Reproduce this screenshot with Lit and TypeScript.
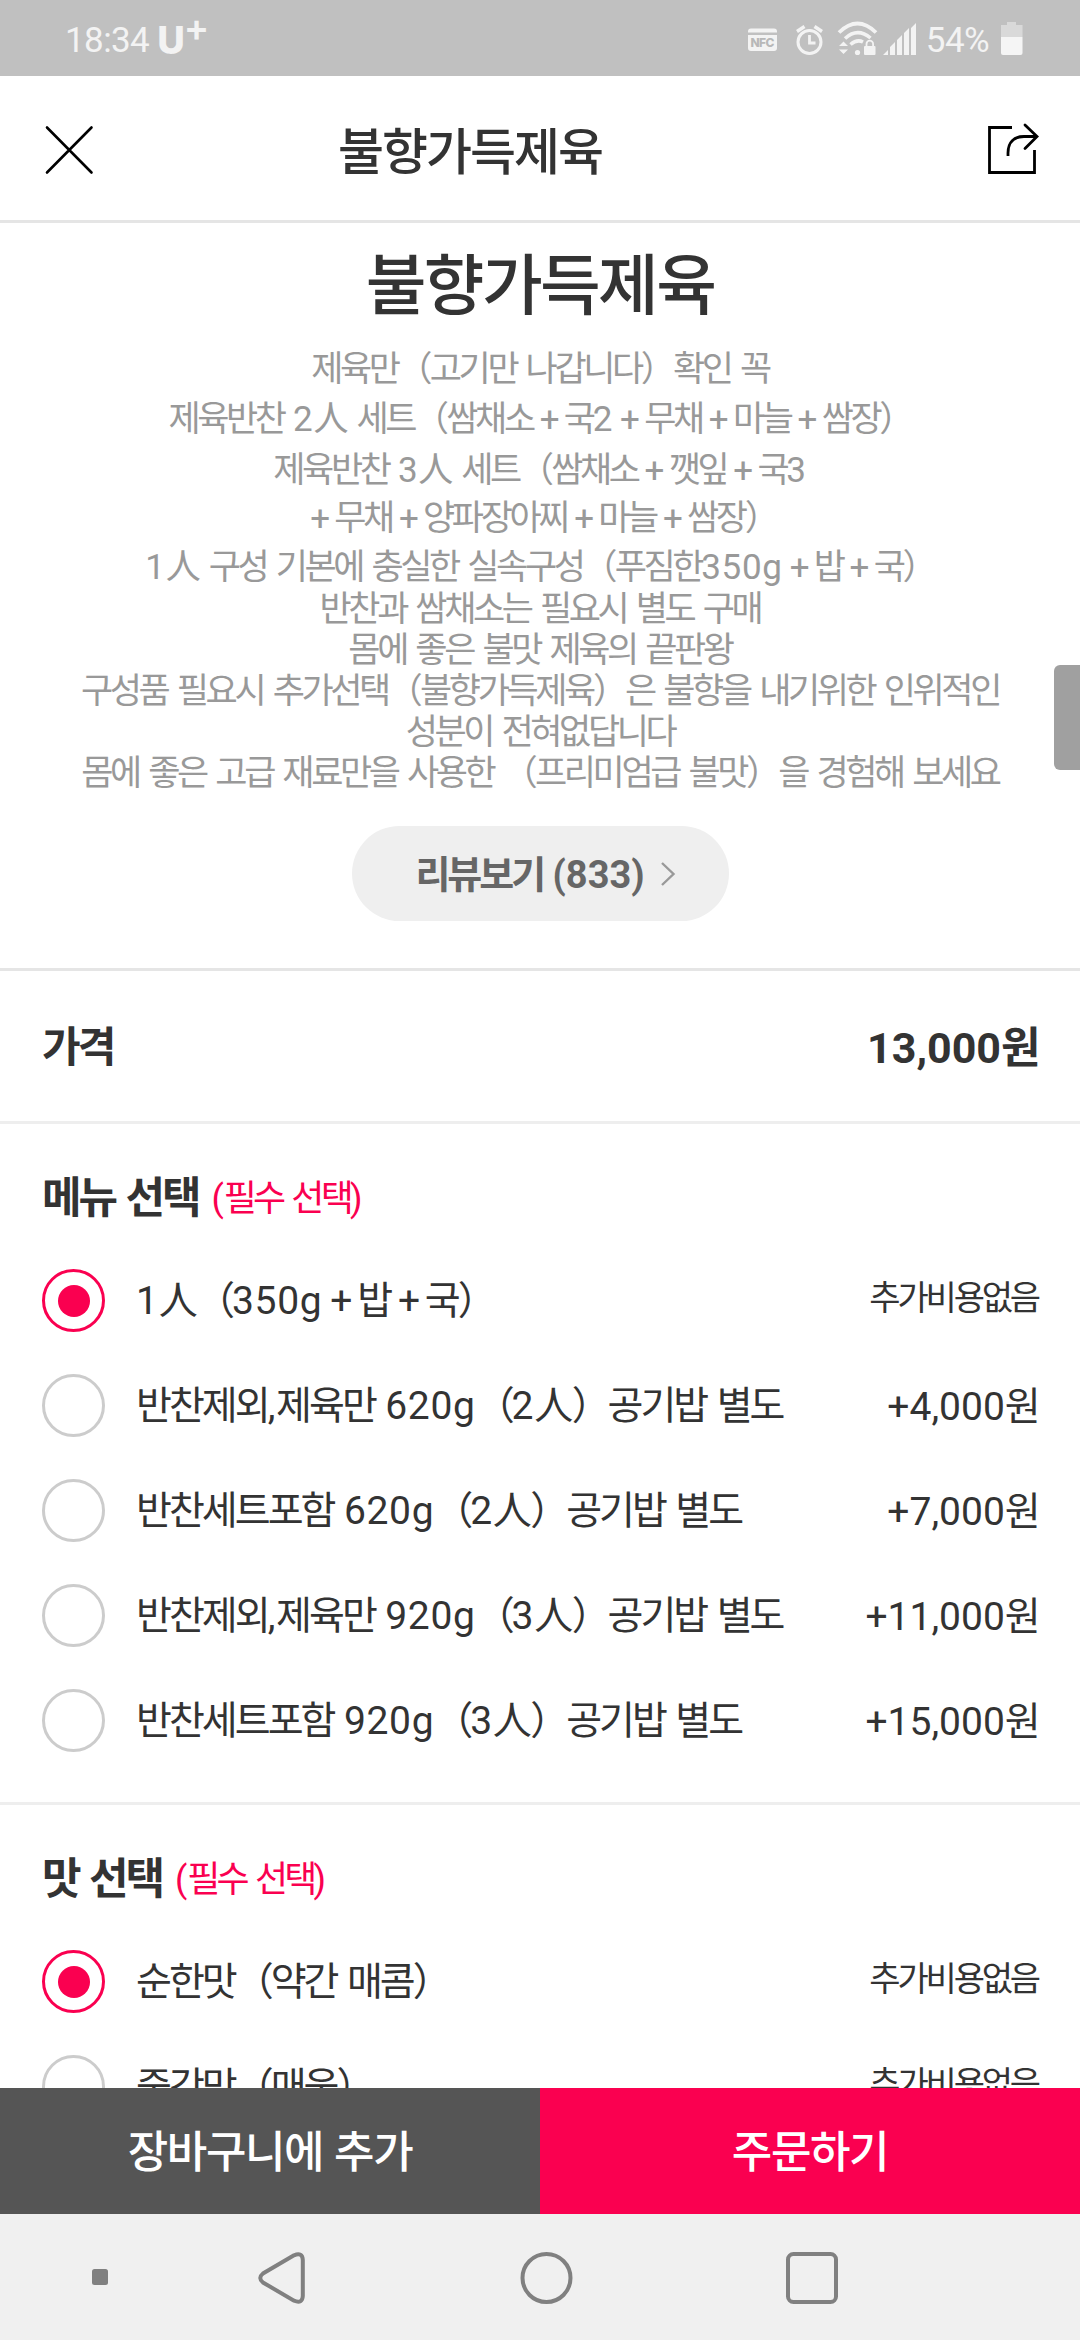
import { LitElement, html, css, svg } from "lit";
import { customElement, property, state } from "lit/decorators.js";
import { classMap } from "lit/directives/class-map.js";

/** Splits mixed Korean text into runs so that each script gets its own tracking. */
const RUNS = /([가-힣]+|[（）]|＋|人)/;
const runClass = (t: string) =>
  /[가-힣]/.test(t) ? "ko" : /[（）]/.test(t) ? "paren" : t === "＋" ? "plus" : t === "人" ? "han" : "latin";
const mixed = (text: string) =>
  text
    .split(RUNS)
    .filter((t) => t !== "")
    .map((t) => html`<span class=${runClass(t)}>${t === "＋" ? "+" : t}</span>`);

const runStyles = css`
  .ko { letter-spacing: var(--ko-track, -0.085em); }
  .paren { letter-spacing: -0.08em; }
  .han { letter-spacing: -0.04em; }
  .latin { letter-spacing: var(--la-track, 0); }
  .plus { display: inline-block; box-sizing: border-box; width: 0.89em; padding-left: 0.08em; text-align: center; }
`;

interface Option {
  label: string;
  price: string;
}

@customElement("status-bar")
class StatusBar extends LitElement {
  static styles = css`
    :host { display: flex; align-items: flex-start; justify-content: space-between; box-sizing: border-box; height: 76px; padding: 0 57px 0 65px; background: #c0c0c0; color: #f3f3f3; font: 400 35px/82px Roboto, sans-serif; }
    .left, .right { display: flex; }
    .time { letter-spacing: -0.6px; }
    .carrier { margin-left: 8px; font: 800 38px/80px Inter, sans-serif; }
    .sup { font: 600 38px/54px Inter, sans-serif; margin-left: -1px; }
    .icons { display: block; width: 174px; height: 76px; }
    .pct { margin-left: 6px; letter-spacing: -0.6px; }
    .battery { display: block; width: 22px; height: 76px; margin-left: 12px; }
    .nfc { font: 800 12px Inter, sans-serif; }
  `;
  render() {
    return html`
      <div class="left">
        <span class="time">18:34</span><span class="carrier">U</span><span class="sup">+</span>
      </div>
      <div class="right">
        <svg class="icons" viewBox="745 0 174 76" fill="none" stroke="#f3f3f3">
          <path d="M747 32.500 v-1 a3 3 0 0 1 3 -3 h23 a3 3 0 0 1 3 3 v1 z M747 35 h29 v13 a3 3 0 0 1 -3 3 h-23 a3 3 0 0 1 -3 -3 z" fill="#f3f3f3" stroke="none" />
          <text class="nfc" x="749.500" y="47" fill="#b8b8b8" stroke="none" textLength="24">NFC</text>
          <circle cx="808.500" cy="42" r="11.500" stroke-width="3" />
          <path d="M808.500 35 v8 h6" stroke-width="2.800" />
          <path d="M796 31.500 l7.500 -5 M821 31.500 l-7.500 -5" stroke-width="3.400" />
          <path d="M838 32.500 Q856.500 14.500 875 32.500" stroke-width="3.800" />
          <path d="M844 38.500 Q856.500 27 869.500 38" stroke-width="3.600" />
          <path d="M849.500 44.500 Q856 39 862 42" stroke-width="3.600" />
          <circle cx="856.500" cy="52.500" r="2.600" fill="#f3f3f3" stroke="none" />
          <path d="M838 46 l4.500 -4.500 l4.500 4.500 z M838 49.500 l4.500 4.500 l4.500 -4.500 z" fill="#f3f3f3" stroke="none" />
          <rect x="863" y="46" width="11.500" height="9" rx="1" fill="#f3f3f3" stroke="none" />
          <path d="M865.500 47 v-3 a3.300 3.300 0 0 1 6.600 0 v3" stroke-width="1.800" />
          <path d="M882 55 l5 -5 v5 z M889 55 v-8 l5 -5 v13 z M896 55 v-15 l5 -5 v20 z M903 55 v-22 l5 -5 v27 z M910 55 v-27 l5 -5 v32 z" fill="#f3f3f3" stroke="none" />
        </svg>
        <span class="pct">54%</span>
        <svg class="battery" viewBox="999 0 22 76">
          <path d="M999 37 v-12 h6 v-3 h9 v3 h6.500 v12 z" fill="#d9d9d9" />
          <path d="M999 37 h21.500 v16 a2 2 0 0 1 -2 2 h-17.500 a2 2 0 0 1 -2 -2 z" fill="#f5f5f5" />
        </svg>
      </div>
    `;
  }
}

@customElement("title-bar")
class TitleBar extends LitElement {
  static styles = [runStyles, css`
    :host { display: flex; align-items: center; box-sizing: border-box; height: 147px; padding: 0 40px; border-bottom: 3px solid #e5e5e5; background: #fff; }
    .close { display: block; width: 58px; height: 56px; }
    .title { flex: 1; margin: 0; padding: 9px 0 0 240px; font-size: 50px; line-height: 60px; font-weight: 500; --ko-track: -0.04em; }
    .share { display: block; width: 56px; height: 60px; }
  `];
  @property() heading = "";
  render() {
    return html`
      <svg class="close" viewBox="40 120 58 56" stroke="#000" stroke-width="2.600" stroke-linecap="round">
        <path d="M47 127.500 L91.500 172.500 M91.500 127.500 L47 172.500" />
      </svg>
      <h1 class="title">${mixed(this.heading)}</h1>
      <svg class="share" viewBox="984 118 56 60" fill="none" stroke="#000" stroke-width="2.800">
        <path d="M1012 127.500 H989.500 V172.500 H1034.500 V150" />
        <path d="M1008 156 V153 C1008 142 1014 136.500 1024 136.500 H1036" />
        <path d="M1025 125 L1037 136.500 L1025 148.500" stroke-linecap="round" />
      </svg>
    `;
  }
}

@customElement("menu-intro")
class MenuIntro extends LitElement {
  static styles = [runStyles, css`
    :host { display: flex; flex-direction: column; align-items: center; box-sizing: border-box; height: 748px; border-bottom: 3px solid #e5e5e5; }
    .name { box-sizing: border-box; margin: 0; padding-top: 24px; height: 127px; font-size: 66px; line-height: 80px; font-weight: 500; color: #333; --ko-track: -0.04em; }
    .desc { display: flex; flex-direction: column; align-items: center; height: 476px; color: #999; font-size: 35px; line-height: 40px; white-space: pre; --ko-track: -0.097em; --la-track: 0.02em; }
    .reviews { display: flex; align-items: center; justify-content: center; box-sizing: border-box; width: 377px; height: 95px; padding: 2px 0 0 11px; border-radius: 48px; background: #efefef; color: #666; font-size: 38px; line-height: 48px; font-weight: 700; --ko-track: -0.08em; }
    .chevron { display: block; width: 16px; height: 26px; margin: 0 0 2px 15px; }
  `];
  private lines: [string, number][] = [
    ["제육만（고기만 나갑니다）확인 꼭", 50],
    ["제육반찬 2人 세트（쌈채소＋국2＋무채＋마늘＋쌈장）", 51],
    ["제육반찬 3人 세트（쌈채소＋깻잎＋국3", 48],
    ["＋무채＋양파장아찌＋마늘＋쌈장）", 49],
    ["1人 구성 기본에 충실한 실속구성（푸짐한350g＋밥＋국）", 42],
    ["반찬과 쌈채소는 필요시 별도 구매", 41],
    ["몸에 좋은 불맛 제육의 끝판왕", 41],
    ["구성품 필요시 추가선택（불향가득제육）은 불향을 내기위한 인위적인", 41],
    ["성분이 전혀없답니다", 41],
    ["몸에 좋은 고급 재료만을 사용한 （프리미엄급 불맛）을 경험해 보세요", 41],
  ];
  render() {
    return html`
      <h2 class="name">${mixed("불향가득제육")}</h2>
      <div class="desc">
        ${this.lines.map(([text, height]) => html`<div style="height:${height}px">${mixed(text)}</div>`)}
      </div>
      <div class="reviews">
        <span>${mixed("리뷰보기 (833)")}</span>
        <svg class="chevron" viewBox="0 0 16 26" fill="none" stroke="#999" stroke-width="2.400"><path d="M2 2 L13.500 13 L2 24" /></svg>
      </div>
    `;
  }
}

@customElement("option-group")
class OptionGroup extends LitElement {
  static styles = [runStyles, css`
    :host { display: block; padding: 0 42px 29px; border-bottom: 3px solid #eee; color: #333; }
    .head { display: flex; align-items: baseline; height: 124px; line-height: 149px; }
    .name { font-size: 43px; font-weight: 700; --ko-track: -0.073em; }
    .req { position: relative; top: -2px; margin-left: 13px; font-size: 36px; line-height: 40px; color: #fa0050; --ko-track: -0.105em; }
    .row { display: flex; align-items: center; height: 105px; white-space: pre; }
    .radio { box-sizing: border-box; width: 63px; height: 63px; border: 3px solid #ccc; border-radius: 50%; display: flex; align-items: center; justify-content: center; }
    .radio.on { border-color: #fa0050; }
    .radio.on::after { content: ""; width: 32px; height: 32px; border-radius: 50%; background: #fa0050; }
    .label { flex: 1; margin-left: 31px; font-size: 39px; line-height: 50px; --ko-track: -0.076em; --la-track: 0.018em; }
    .price { font-size: 39px; line-height: 50px; padding-top: 2px; --ko-track: -0.07em; }
    .price.free { font-size: 34px; padding-top: 0; margin-bottom: 6px; --ko-track: -0.093em; }
  `];
  @property() name = "";
  @property({ attribute: false }) options: Option[] = [];
  @state() private selected = 0;
  render() {
    return html`
      <div class="head">
        <span class="name">${mixed(this.name)}</span><span class="req">${mixed("(필수 선택)")}</span>
      </div>
      ${this.options.map((o, i) => html`
        <div class="row" @click=${() => (this.selected = i)}>
          <span class=${classMap({ radio: true, on: this.selected === i })}></span>
          <span class="label">${mixed(o.label)}</span>
          <span class=${classMap({ price: true, free: !o.price.startsWith("+") })}>${mixed(o.price)}</span>
        </div>`)}
    `;
  }
}

@customElement("nav-bar")
class NavBar extends LitElement {
  static styles = css`
    :host { display: block; height: 126px; background: #f0f0f0; }
    .keys { display: block; width: 1080px; height: 126px; }
  `;
  private shapes = svg`
    <rect x="92" y="55" width="16" height="16" rx="2.500" fill="#808080" stroke="none" />
    <path d="M294 41.300 L263 59.500 Q257.500 64 263 68.500 L294 86.700 Q302.500 90 302.800 82 V46 Q302.500 38 294 41.300 Z" />
    <circle cx="546.500" cy="64" r="24" />
    <rect x="788" y="40" width="48" height="48" rx="5.500" />
  `;
  render() {
    return html`<svg class="keys" viewBox="0 0 1080 126" fill="none" stroke="#808080" stroke-width="4">${this.shapes}</svg>`;
  }
}

@customElement("app-root")
class AppRoot extends LitElement {
  static styles = [runStyles, css`
    :host { display: flex; flex-direction: column; position: relative; width: 1080px; height: 2340px; overflow: hidden; background: #fff; color: #333; font-family: Roboto, "Noto Sans CJK KR", sans-serif; }
    .content { flex: 1; min-height: 0; overflow: hidden; }
    .total { display: flex; align-items: center; justify-content: space-between; box-sizing: border-box; height: 153px; padding: 4px 42px 0; border-bottom: 3px solid #eee; font-size: 43px; line-height: 60px; font-weight: 700; --ko-track: -0.06em; }
    .total-name { font-size: 42px; --ko-track: -0.07em; }
    .thumb { position: absolute; right: 0; top: 665px; width: 26px; height: 105px; border-radius: 6px 0 0 6px; background: #a0a0a0; }
    .actions { display: grid; grid-template-columns: 1fr 1fr; height: 126px; }
    .action { display: flex; align-items: center; justify-content: center; border: 0; padding: 4px 0 0; color: #fff; background: #555; font: 500 44px/60px Roboto, "Noto Sans CJK KR", sans-serif; white-space: pre; --ko-track: -0.032em; }
    .action.order { background: #fa0050; }
  `];
  private menu: Option[] = [
    { label: "1人（350g＋밥＋국）", price: "추가비용없음" },
    { label: "반찬제외,제육만 620g（2人）공기밥 별도", price: "+4,000원" },
    { label: "반찬세트포함 620g（2人）공기밥 별도", price: "+7,000원" },
    { label: "반찬제외,제육만 920g（3人）공기밥 별도", price: "+11,000원" },
    { label: "반찬세트포함 920g（3人）공기밥 별도", price: "+15,000원" },
  ];
  private taste: Option[] = [
    { label: "순한맛（약간 매콤）", price: "추가비용없음" },
    { label: "중간맛（매움）", price: "추가비용없음" },
  ];
  render() {
    return html`
      <status-bar></status-bar>
      <title-bar heading="불향가득제육"></title-bar>
      <main class="content">
        <menu-intro></menu-intro>
        <div class="total"><span class="total-name">${mixed("가격")}</span><span>${mixed("13,000원")}</span></div>
        <option-group name="메뉴 선택" .options=${this.menu}></option-group>
        <option-group name="맛 선택" .options=${this.taste}></option-group>
      </main>
      <div class="actions">
        <button class="action">${mixed("장바구니에 추가")}</button>
        <button class="action order">${mixed("주문하기")}</button>
      </div>
      <nav-bar></nav-bar>
      <div class="thumb"></div>
    `;
  }
}
